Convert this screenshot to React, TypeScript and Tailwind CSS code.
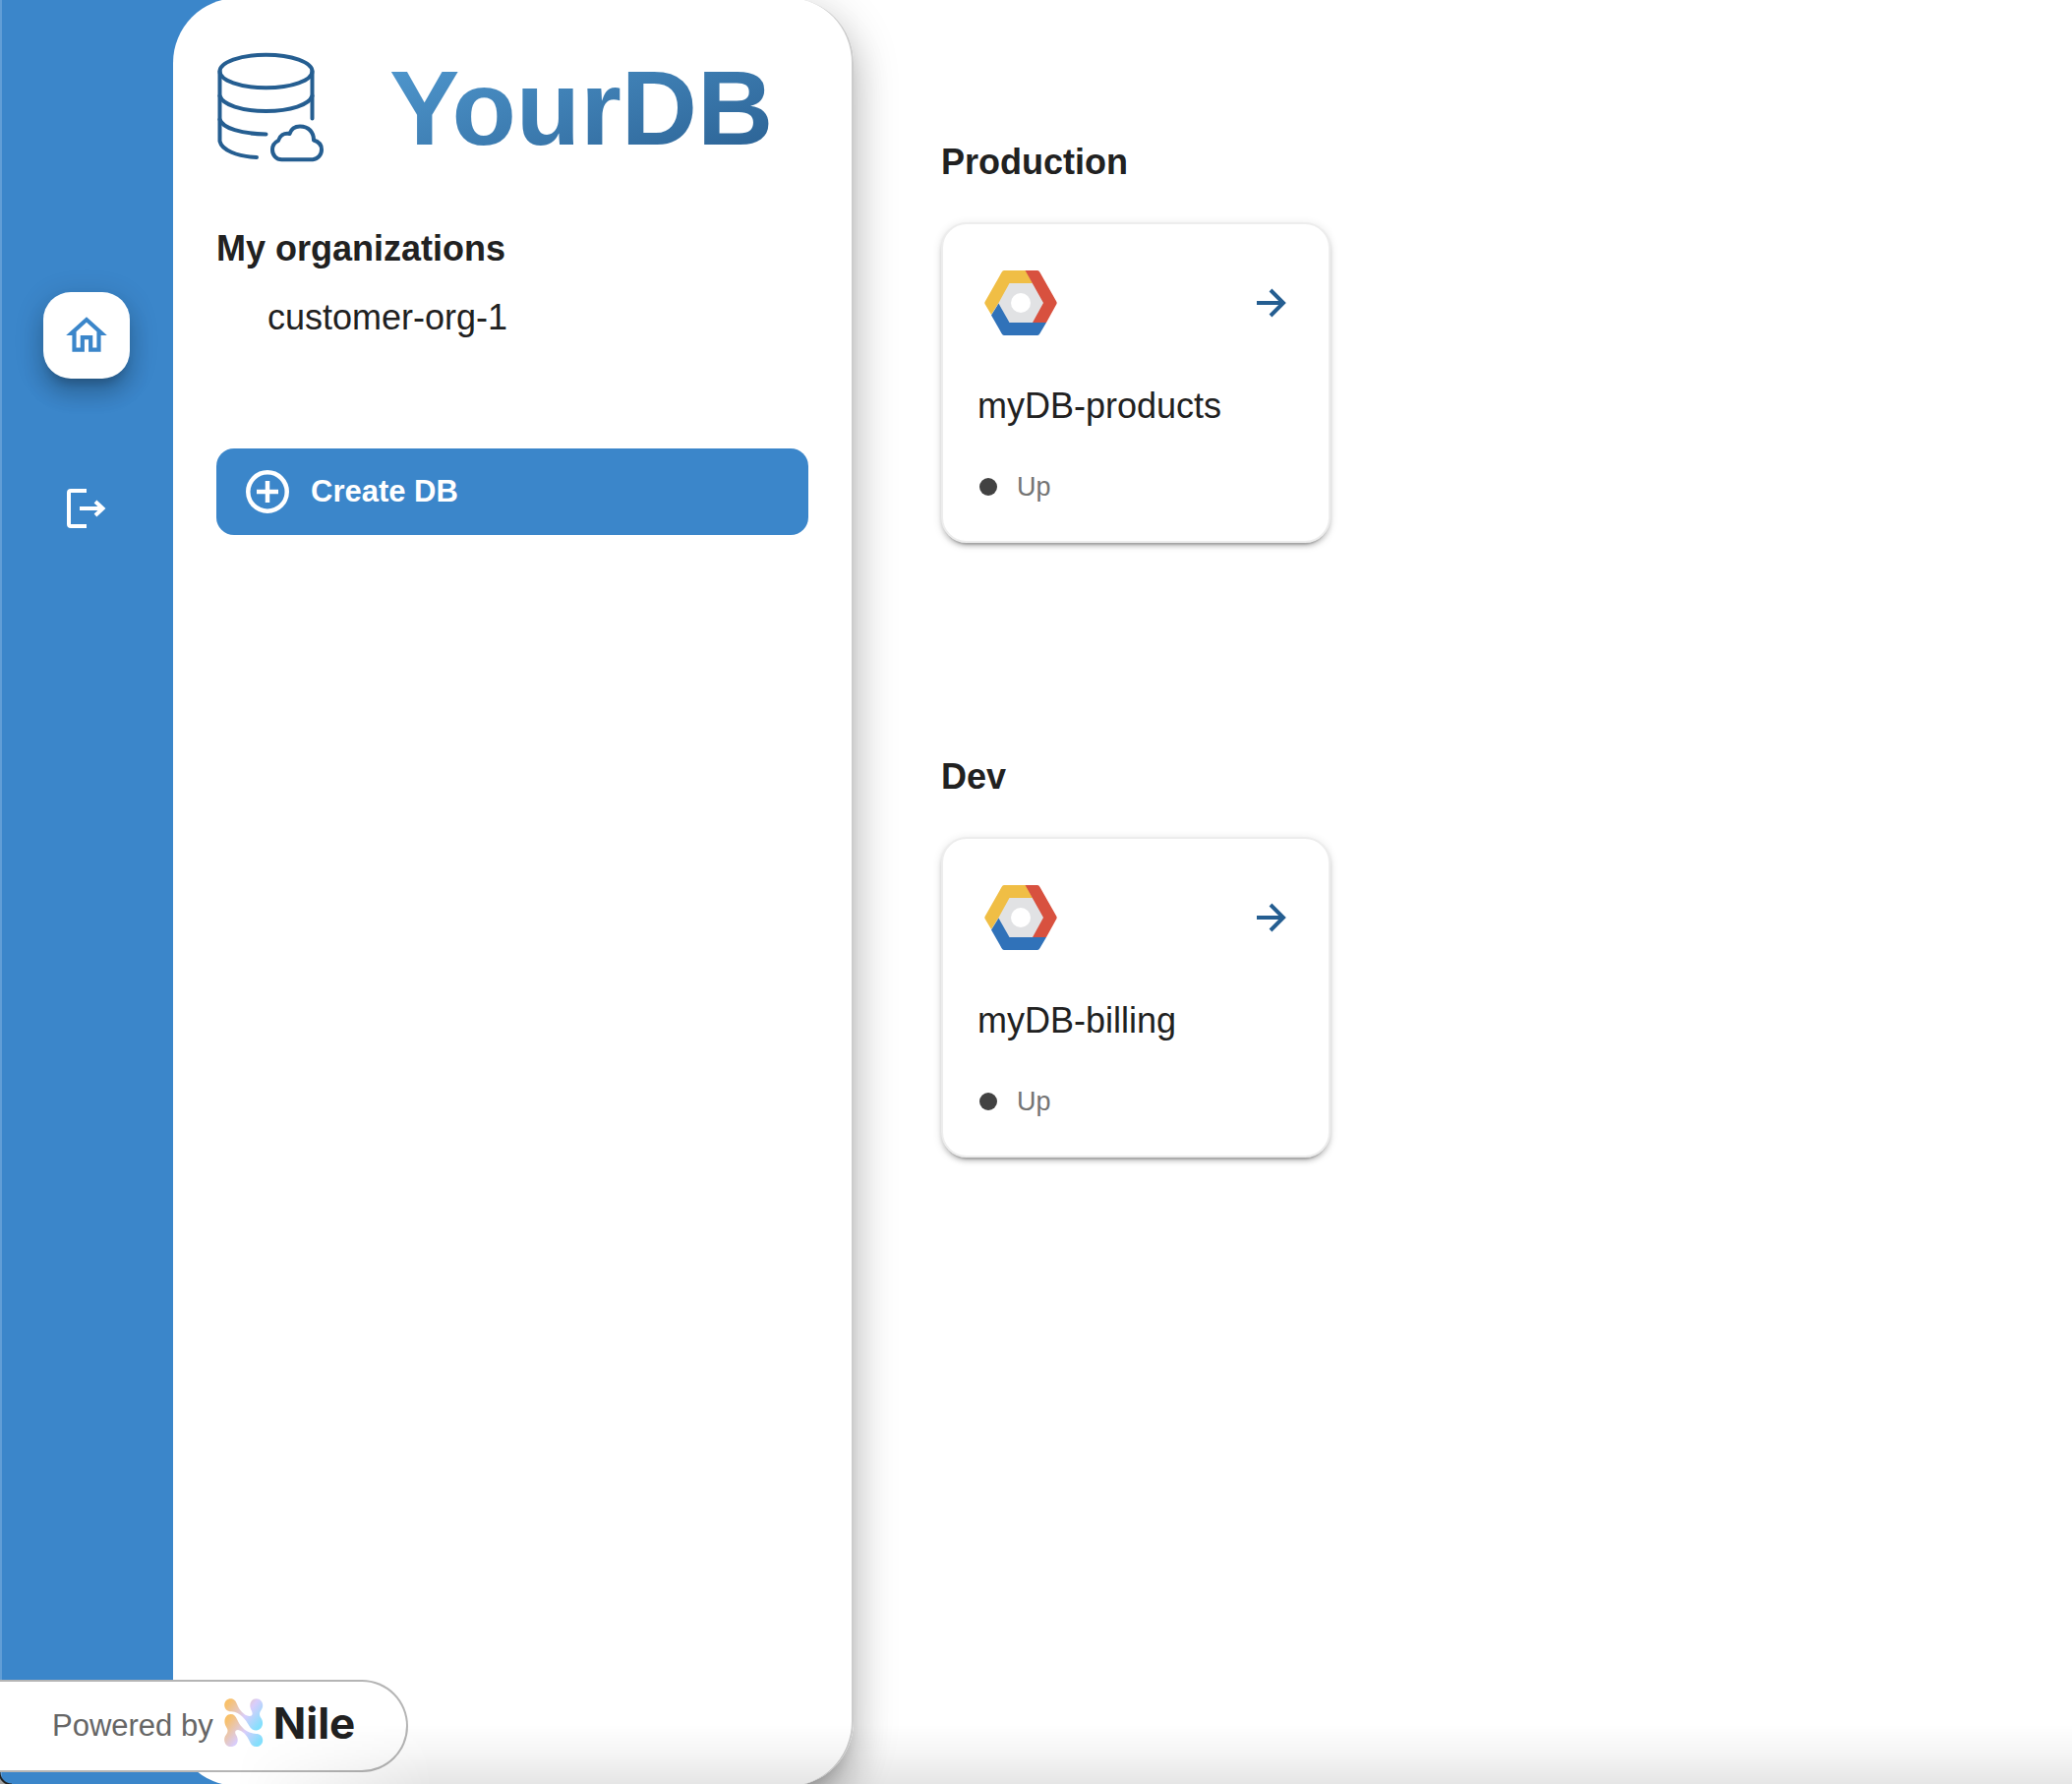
import React from 'react';

const sans = "font-['Liberation_Sans',Arial,sans-serif]";

function DatabaseCloudIcon() {
  return (
    <svg viewBox="-1.5 -1.5 110 114" className="h-[114px] w-[110px] shrink-0" fill="none" stroke="#255e91" strokeWidth="4" strokeLinecap="round" strokeLinejoin="round" aria-hidden="true">
      <ellipse cx="49" cy="18" rx="47" ry="16.8" />
      <path d="M2 18V89c2 9 17 15.500 37.500 16.500M96 18v48" />
      <path d="M2 43c3 9 22 15.500 47 15.500s44-6.500 47-15.500" />
      <path d="M2 67c3 9 22 14.500 47 15" />
      <path d="M65 107.800H96.500a10 10 0 0 0 9-10.300c0-5-3-8-8-9.500 0-8-5-14-14-14-5 0-9 3-10.500 7.500-6-1-10 2-11.500 7-4 2-6 5-6 9 0 6 4 10.300 9.500 10.300Z" />
    </svg>
  );
}

function HomeIcon() {
  return (
    <svg viewBox="0 0 24 24" className="size-[50px]" fill="currentColor" aria-hidden="true">
      <path d="m12 5.690 5 4.500V18h-2v-6H9v6H7v-7.810l5-4.500M12 3 2 12h3v8h6v-6h2v6h6v-8h3L12 3z" />
    </svg>
  );
}

function LogoutIcon() {
  return (
    <svg viewBox="0 0 40 40" className="size-10" fill="none" stroke="currentColor" strokeWidth="4" aria-hidden="true">
      <path d="M20 2H4a2 2 0 0 0-2 2v32a2 2 0 0 0 2 2h16" />
      <path d="M13 20h23" />
      <path d="m29 13 7.500 7-7.500 7" />
    </svg>
  );
}

function PlusCircleIcon() {
  return (
    <svg viewBox="0 0 44 44" className="size-11" fill="none" stroke="currentColor" strokeWidth="4.500" aria-hidden="true">
      <circle cx="22" cy="22" r="19.750" />
      <path d="M22 11v22M11 22h22" />
    </svg>
  );
}

function CloudPlatformLogo() {
  return (
    <svg viewBox="0 0 74 66" className="h-[66px] w-[74px]" aria-hidden="true">
      <path fill="#e1e2e4" d="M22 10h30l10 23-12 22H24L12 33Z" />
      <path fill="#f0be45" d="M20 0h22l7 13H25.500L14.500 33 7 45 .5 34a3 3 0 0 1 0-2L17.500 2Q18.500 0 20 0Z" />
      <path fill="#d8513f" d="M41.500 0H54q1.500 0 2.500 2l17 30a3 3 0 0 1 0 2L63 53H49l11-20Z" />
      <path fill="#3072b9" d="M14.500 33.500 25.500 53H63l-6.500 11q-1 2-2.500 2H20q-1.500 0-2.500-2L7 45.500Z" />
      <circle cx="37" cy="33" r="10" fill="#fff" />
    </svg>
  );
}

function ArrowIcon() {
  return (
    <svg viewBox="0 0 30 30" className="size-[30px]" fill="none" stroke="#255e91" strokeWidth="4" aria-hidden="true">
      <path d="M0 15h27M14 2l13 13-13 13" />
    </svg>
  );
}

function NileMark() {
  return (
    <svg viewBox="0 0 40 50" className="h-[50px] w-10" aria-hidden="true">
      <defs>
        <linearGradient id="nileTop" gradientUnits="userSpaceOnUse" x1="4" y1="4" x2="35" y2="29">
          <stop offset="0" stopColor="#f8c06a" />
          <stop offset=".55" stopColor="#d9cdfb" />
          <stop offset="1" stopColor="#84e0fd" />
        </linearGradient>
        <linearGradient id="nileBottom" gradientUnits="userSpaceOnUse" x1="4" y1="20" x2="35" y2="45">
          <stop offset="0" stopColor="#f8c06a" />
          <stop offset=".55" stopColor="#d9cdfb" />
          <stop offset="1" stopColor="#84e0fd" />
        </linearGradient>
      </defs>
      <path fill="url(#nileTop)" d="M6.700.2C10 .2 12 2.500 13.300 6.500 15 11 20 17.500 25.500 18c3 0 4-2 2.300-5.500C24.500 7 27 .2 32.500.2c6.500 0 8.500 7.500 5 11.800-2 3-2 5 0 8 3.500 5 1 12.500-5 12.500-3.500 0-5.500-2-7-4.500C22 22 17 14 7 13.200 3 13.200.2 10.500.2 6.700S3 .2 6.700.2Z" />
      <path fill="url(#nileBottom)" d="M6.700 15.900c3.300 0 5 2 6.500 5.600C16 28 22 35.300 32.500 35.900c4 0 6.700 2.600 6.700 6.600s-3 6.600-6.700 6.600c-3.500 0-5.500-2.300-7-6C23.500 38 18.500 32.500 14 32c-3 0-3.500 2.500-2 5 4 6 .5 12.100-5.300 12.100-6.200 0-8.300-7.500-5-11.800 2.300-3 2.300-5.600.5-8C-1.500 23.500.8 15.900 6.700 15.900Z" />
    </svg>
  );
}

function DatabaseCard({ name, status }: { name: string; status: string }) {
  return (
    <article className="w-[396px] rounded-[26px] border-2 border-[#ededed] bg-white px-[35px] pt-[47px] pb-[35px] shadow-[0_6px_2px_-4px_rgba(0,0,0,0.2),0_4px_4px_0_rgba(0,0,0,0.14),0_2px_10px_0_rgba(0,0,0,0.12)]">
      <div className="flex items-center justify-between pr-2 pl-[7px]">
        <CloudPlatformLogo />
        <a href="#" aria-label={`Open ${name}`}>
          <ArrowIcon />
        </a>
      </div>
      <h3 className="mt-[46px] text-[36px] leading-[52px] text-[#212121]">{name}</h3>
      <p className="mt-9 flex items-center gap-5 text-[27px] leading-[40px] text-[#747474]">
        <span className="ml-[2px] size-[18px] rounded-full bg-[#424242]" />
        {status}
      </p>
    </article>
  );
}

function Environment({ title, name }: { title: string; name: string }) {
  return (
    <section>
      <h2 className="mb-[35px] text-[36px] leading-[52px] font-bold text-[#212121]">{title}</h2>
      <DatabaseCard name={name} status="Up" />
    </section>
  );
}

export default function App() {
  return (
    <div className={`relative flex min-h-screen overflow-hidden bg-white ${sans}`}>
      <div className="-my-0.5 flex shrink-0 rounded-r-[66px] border-l-2 border-[#619ed6] bg-[linear-gradient(90deg,#3b86ca_260px,#ffffff_260px)] shadow-[0_14px_16px_-8px_rgba(0,0,0,0.2),0_24px_34px_4px_rgba(0,0,0,0.14),0_10px_44px_8px_rgba(0,0,0,0.12)]">
        <nav className="flex w-[174px] flex-col items-center gap-[88px] pt-[299px] pr-[2px]" aria-label="Main">
          <a href="#" aria-label="Home" className="flex size-22 items-center justify-center rounded-[28px] bg-white text-[#3b86ca] shadow-[0_10px_10px_-6px_rgba(0,0,0,0.2),0_16px_20px_2px_rgba(0,0,0,0.14),0_6px_28px_4px_rgba(0,0,0,0.12)]">
            <HomeIcon />
          </a>
          <button type="button" aria-label="Log out" className="flex size-22 items-center justify-center text-white">
            <LogoutIcon />
          </button>
        </nav>
        <aside className="w-[692px] rounded-[66px] border-r-2 border-[#cccccc] bg-white px-11 pt-[55px]">
          <div className="flex items-center gap-[66px]">
            <DatabaseCloudIcon />
            <h1 className="bg-linear-[160deg] from-[#5099d0] to-[#2a6092] bg-clip-text text-[107px] leading-[112px] font-bold text-transparent">YourDB</h1>
          </div>
          <h2 className="mt-[60px] text-[36px] leading-[52px] font-bold text-[#212121]">My organizations</h2>
          <p className="mt-[18px] pl-[52px] text-[36px] leading-[52px] text-[#212121]">customer-org-1</p>
          <button type="button" className="mt-[107px] flex h-22 w-full items-center gap-[22px] rounded-[18px] bg-[#3b86ca] pl-[30px] text-[31px] font-bold text-white">
            <PlusCircleIcon />
            Create DB
          </button>
        </aside>
      </div>
      <main className="flex flex-1 flex-col gap-[212px] pt-[139px] pl-[89px]">
        <Environment title="Production" name="myDB-products" />
        <Environment title="Dev" name="myDB-billing" />
      </main>
      <div className="absolute bottom-3 left-0 flex h-[94px] items-center rounded-r-full border-2 border-l-0 border-[#b5b5b5] bg-white pr-[52px] pl-[53px]">
        <span className="text-[31px] text-[#666666]">Powered by</span>
        <span className="ml-[11px] flex items-center gap-2.5 pb-1.5">
          <NileMark />
          <span className="font-['Inter',sans-serif] text-[44px] leading-[50px] font-bold text-[#212121]">Nile</span>
        </span>
      </div>
      <div className="pointer-events-none absolute right-0 bottom-0 left-[240px] h-[60px] bg-linear-to-t from-black/10 via-black/4 to-transparent mask-linear-[90deg,transparent,black_200px]" />
      <div className="pointer-events-none absolute bottom-0 left-0 size-3 bg-[radial-gradient(circle_at_top_right,transparent_11px,#222222_12px,#222222_13px,#a3a3a3_14px)]" />
    </div>
  );
}
